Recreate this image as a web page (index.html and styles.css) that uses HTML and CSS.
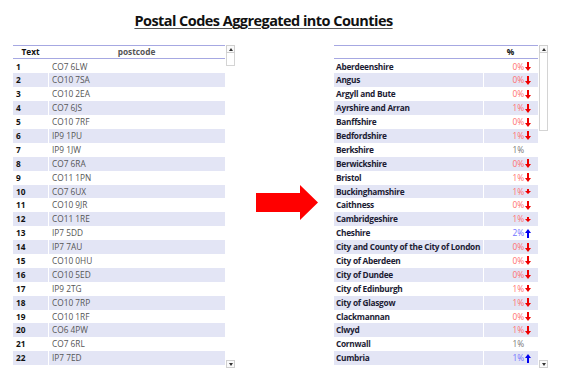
FILE: index.html
```html
<!DOCTYPE html>
<html>
<head>
<meta charset="utf-8">
<link rel="stylesheet" href="styles.css">
</head>
<body>
<h1 class="title">Postal Codes Aggregated into Counties</h1>
<div class="main">
  <div class="panel panel-left">
    <div class="table">
      <div class="thead left-cols"><div class="c-num">Text</div><div class="c-code">postcode</div></div>
      <div class="tbody">
        <div class="row left-cols"><div class="c-num">1</div><div class="c-code">CO7 6LW</div></div>
        <div class="row left-cols"><div class="c-num">2</div><div class="c-code">CO10 7SA</div></div>
        <div class="row left-cols"><div class="c-num">3</div><div class="c-code">CO10 2EA</div></div>
        <div class="row left-cols"><div class="c-num">4</div><div class="c-code">CO7 6JS</div></div>
        <div class="row left-cols"><div class="c-num">5</div><div class="c-code">CO10 7RF</div></div>
        <div class="row left-cols"><div class="c-num">6</div><div class="c-code">IP9 1PU</div></div>
        <div class="row left-cols"><div class="c-num">7</div><div class="c-code">IP9 1JW</div></div>
        <div class="row left-cols"><div class="c-num">8</div><div class="c-code">CO7 6RA</div></div>
        <div class="row left-cols"><div class="c-num">9</div><div class="c-code">CO11 1PN</div></div>
        <div class="row left-cols"><div class="c-num">10</div><div class="c-code">CO7 6UX</div></div>
        <div class="row left-cols"><div class="c-num">11</div><div class="c-code">CO10 9JR</div></div>
        <div class="row left-cols"><div class="c-num">12</div><div class="c-code">CO11 1RE</div></div>
        <div class="row left-cols"><div class="c-num">13</div><div class="c-code">IP7 5DD</div></div>
        <div class="row left-cols"><div class="c-num">14</div><div class="c-code">IP7 7AU</div></div>
        <div class="row left-cols"><div class="c-num">15</div><div class="c-code">CO10 0HU</div></div>
        <div class="row left-cols"><div class="c-num">16</div><div class="c-code">CO10 5ED</div></div>
        <div class="row left-cols"><div class="c-num">17</div><div class="c-code">IP9 2TG</div></div>
        <div class="row left-cols"><div class="c-num">18</div><div class="c-code">CO10 7RP</div></div>
        <div class="row left-cols"><div class="c-num">19</div><div class="c-code">CO10 1RF</div></div>
        <div class="row left-cols"><div class="c-num">20</div><div class="c-code">CO6 4PW</div></div>
        <div class="row left-cols"><div class="c-num">21</div><div class="c-code">CO7 6RL</div></div>
        <div class="row left-cols"><div class="c-num">22</div><div class="c-code">IP7 7ED</div></div>
        <div class="row left-cols"><div class="c-num">23</div><div class="c-code">CO10 9JT</div></div>
      </div>
    </div>
    <div class="scrollbar">
      <div class="sb-top"><div class="sb-btn"><span class="tri-up"></span></div><div class="sb-thumb thumb-left"></div></div>
      <div class="sb-btn"><span class="tri-down"></span></div>
    </div>
  </div>

  <div class="arrow-wrap">
    <svg width="62" height="36" viewBox="0 0 62 36"><path d="M0 8 H44 V0 L62 17.5 L44 35 V27 H0 Z" fill="#ff0000"/></svg>
  </div>

  <div class="panel panel-right">
    <div class="table table-right">
      <div class="thead right-cols"><div class="c-name"></div><div class="c-pct">%</div></div>
      <div class="tbody">
        <div class="row right-cols"><div class="c-name">Aberdeenshire</div><div class="c-pct down">0%<svg class="ar" viewBox="0 0 6 9"><path d="M2 0H4V5H6L3 9L0 5H2Z"/></svg></div></div>
        <div class="row right-cols"><div class="c-name">Angus</div><div class="c-pct down">0%<svg class="ar" viewBox="0 0 6 9"><path d="M2 0H4V5H6L3 9L0 5H2Z"/></svg></div></div>
        <div class="row right-cols"><div class="c-name">Argyll and Bute</div><div class="c-pct down">0%<svg class="ar" viewBox="0 0 6 9"><path d="M2 0H4V5H6L3 9L0 5H2Z"/></svg></div></div>
        <div class="row right-cols"><div class="c-name">Ayrshire and Arran</div><div class="c-pct down">1%<svg class="ar" viewBox="0 0 6 9"><path d="M2 0H4V5H6L3 9L0 5H2Z"/></svg></div></div>
        <div class="row right-cols"><div class="c-name">Banffshire</div><div class="c-pct down">0%<svg class="ar" viewBox="0 0 6 9"><path d="M2 0H4V5H6L3 9L0 5H2Z"/></svg></div></div>
        <div class="row right-cols"><div class="c-name">Bedfordshire</div><div class="c-pct down">1%<svg class="ar" viewBox="0 0 6 9"><path d="M2 0H4V5H6L3 9L0 5H2Z"/></svg></div></div>
        <div class="row right-cols"><div class="c-name">Berkshire</div><div class="c-pct flat">1%<span class="ar-space"></span></div></div>
        <div class="row right-cols"><div class="c-name">Berwickshire</div><div class="c-pct down">0%<svg class="ar" viewBox="0 0 6 9"><path d="M2 0H4V5H6L3 9L0 5H2Z"/></svg></div></div>
        <div class="row right-cols"><div class="c-name">Bristol</div><div class="c-pct down">1%<svg class="ar" viewBox="0 0 6 9"><path d="M2 0H4V5H6L3 9L0 5H2Z"/></svg></div></div>
        <div class="row right-cols"><div class="c-name">Buckinghamshire</div><div class="c-pct down">1%<svg class="ar" viewBox="0 0 6 9"><path d="M2 2H4V4H6L3 7L0 4H2Z"/></svg></div></div>
        <div class="row right-cols"><div class="c-name">Caithness</div><div class="c-pct down">0%<svg class="ar" viewBox="0 0 6 9"><path d="M2 0H4V5H6L3 9L0 5H2Z"/></svg></div></div>
        <div class="row right-cols"><div class="c-name">Cambridgeshire</div><div class="c-pct down">1%<svg class="ar" viewBox="0 0 6 9"><path d="M2 2H4V4H6L3 7L0 4H2Z"/></svg></div></div>
        <div class="row right-cols"><div class="c-name">Cheshire</div><div class="c-pct up">2%<svg class="ar" viewBox="0 0 6 9"><path d="M2 9H4V4H6L3 0L0 4H2Z"/></svg></div></div>
        <div class="row right-cols"><div class="c-name">City and County of the City of London</div><div class="c-pct down">0%<svg class="ar" viewBox="0 0 6 9"><path d="M2 0H4V5H6L3 9L0 5H2Z"/></svg></div></div>
        <div class="row right-cols"><div class="c-name">City of Aberdeen</div><div class="c-pct down">0%<svg class="ar" viewBox="0 0 6 9"><path d="M2 0H4V5H6L3 9L0 5H2Z"/></svg></div></div>
        <div class="row right-cols"><div class="c-name">City of Dundee</div><div class="c-pct down">0%<svg class="ar" viewBox="0 0 6 9"><path d="M2 0H4V5H6L3 9L0 5H2Z"/></svg></div></div>
        <div class="row right-cols"><div class="c-name">City of Edinburgh</div><div class="c-pct down">1%<svg class="ar" viewBox="0 0 6 9"><path d="M2 1H4V4H6L3 8L0 4H2Z"/></svg></div></div>
        <div class="row right-cols"><div class="c-name">City of Glasgow</div><div class="c-pct down">1%<svg class="ar" viewBox="0 0 6 9"><path d="M2 0H4V5H6L3 9L0 5H2Z"/></svg></div></div>
        <div class="row right-cols"><div class="c-name">Clackmannan</div><div class="c-pct down">0%<svg class="ar" viewBox="0 0 6 9"><path d="M2 0H4V5H6L3 9L0 5H2Z"/></svg></div></div>
        <div class="row right-cols"><div class="c-name">Clwyd</div><div class="c-pct down">1%<svg class="ar" viewBox="0 0 6 9"><path d="M2 0H4V5H6L3 9L0 5H2Z"/></svg></div></div>
        <div class="row right-cols"><div class="c-name">Cornwall</div><div class="c-pct flat">1%<span class="ar-space"></span></div></div>
        <div class="row right-cols"><div class="c-name">Cumbria</div><div class="c-pct up">1%<svg class="ar" viewBox="0 0 6 9"><path d="M2 9H4V4H6L3 0L0 4H2Z"/></svg></div></div>
        <div class="row right-cols"><div class="c-name">Derbyshire</div><div class="c-pct up">2%<svg class="ar" viewBox="0 0 6 9"><path d="M2 9H4V4H6L3 0L0 4H2Z"/></svg></div></div>
      </div>
    </div>
    <div class="scrollbar">
      <div class="sb-top"><div class="sb-btn"><span class="tri-up"></span></div><div class="sb-thumb thumb-right"></div></div>
      <div class="sb-btn"><span class="tri-down"></span></div>
    </div>
  </div>
</div>
</body>
</html>
```
FILE: styles.css
```css
html, body {
  margin: 0;
  padding: 0;
  background: #ffffff;
}
body {
  width: 564px;
  height: 382px;
  overflow: hidden;
  font-family: "Open Sans", "DejaVu Sans", sans-serif;
}
.title {
  margin: 0;
  padding-top: 11px;
  padding-right: 37px;
  height: 36px;
  box-sizing: border-box;
  text-align: center;
  font-size: 14.5px;
  font-weight: 700;
  letter-spacing: -0.55px;
  line-height: 20px;
  color: #111111;
  text-decoration: underline;
  text-decoration-color: #555555;
  text-decoration-thickness: 1px;
  text-underline-offset: 2px;
}
.main {
  display: flex;
  align-items: flex-start;
  padding-left: 13px;
  padding-top: 9px;
}
.panel {
  display: flex;
  gap: 1px;
  height: 323px;
}
.table {
  width: 212px;
  height: 323px;
  overflow: hidden;
  font-size: 8.3px;
}
.table-right {
  width: 204px;
}
.thead {
  height: 14px;
  box-sizing: border-box;
  border-top: 1px solid #a6a8e2;
  border-bottom: 1px solid #a6a8e2;
  font-weight: 700;
  color: #111111;
  line-height: 12px;
  align-items: center;
}
.left-cols {
  display: grid;
  grid-template-columns: 35px 1fr;
}
.right-cols {
  display: grid;
  grid-template-columns: 149px 1fr;
}
.thead .c-num { text-align: center; padding-left: 0; }
.thead .c-code { text-align: center; padding-left: 0; }
.thead .c-pct { text-align: center; padding-right: 0; justify-content: center; }
.tbody {
  padding-top: 0.5px;
}
.row {
  height: 13.9px;
  line-height: 13.9px;
  box-sizing: border-box;
}
.row:nth-child(even) > div {
  background: #e3e5f5;
}
.row > div + div {
  border-left: 1px solid #ffffff;
}
.c-num {
  font-weight: 700;
  color: #111111;
  padding-left: 3px;
}
.c-code {
  color: #555555;
  padding-left: 3px;
}
.c-name {
  font-weight: 700;
  letter-spacing: -0.28px;
  color: #1c1c34;
  padding-left: 2px;
  white-space: nowrap;
  overflow: hidden;
}
.c-pct {
  display: flex;
  justify-content: flex-end;
  align-items: center;
  padding-right: 7px;
}
.down { color: #ff6f6f; }
.down .ar { fill: #ee0000; }
.up { color: #7070ff; }
.up .ar { fill: #0000ee; }
.flat { color: #777777; }
.ar {
  width: 6px;
  height: 9px;
  margin-left: 1px;
}
.ar-space {
  display: inline-block;
  width: 7px;
}
.scrollbar {
  width: 9px;
  height: 323px;
  display: flex;
  flex-direction: column;
  justify-content: space-between;
}
.sb-top {
  display: flex;
  flex-direction: column;
}
.sb-btn {
  width: 9px;
  height: 8px;
  box-sizing: border-box;
  border: 1px solid #cfcfcf;
  background: #fafafa;
  display: flex;
  align-items: center;
  justify-content: center;
}
.sb-thumb {
  width: 9px;
  box-sizing: border-box;
  border: 1px solid #d4d4d4;
  border-top: none;
  background: #ffffff;
}
.thumb-left { height: 13px; }
.thumb-right { height: 78px; }
.tri-up {
  width: 0;
  height: 0;
  border-left: 2.5px solid transparent;
  border-right: 2.5px solid transparent;
  border-bottom: 3px solid #333333;
}
.tri-down {
  width: 0;
  height: 0;
  border-left: 2.5px solid transparent;
  border-right: 2.5px solid transparent;
  border-top: 3px solid #333333;
}
.arrow-wrap {
  margin-left: 21px;
  margin-right: 16px;
  margin-top: 140px;
  height: 36px;
}
.arrow-wrap svg {
  display: block;
}
```
